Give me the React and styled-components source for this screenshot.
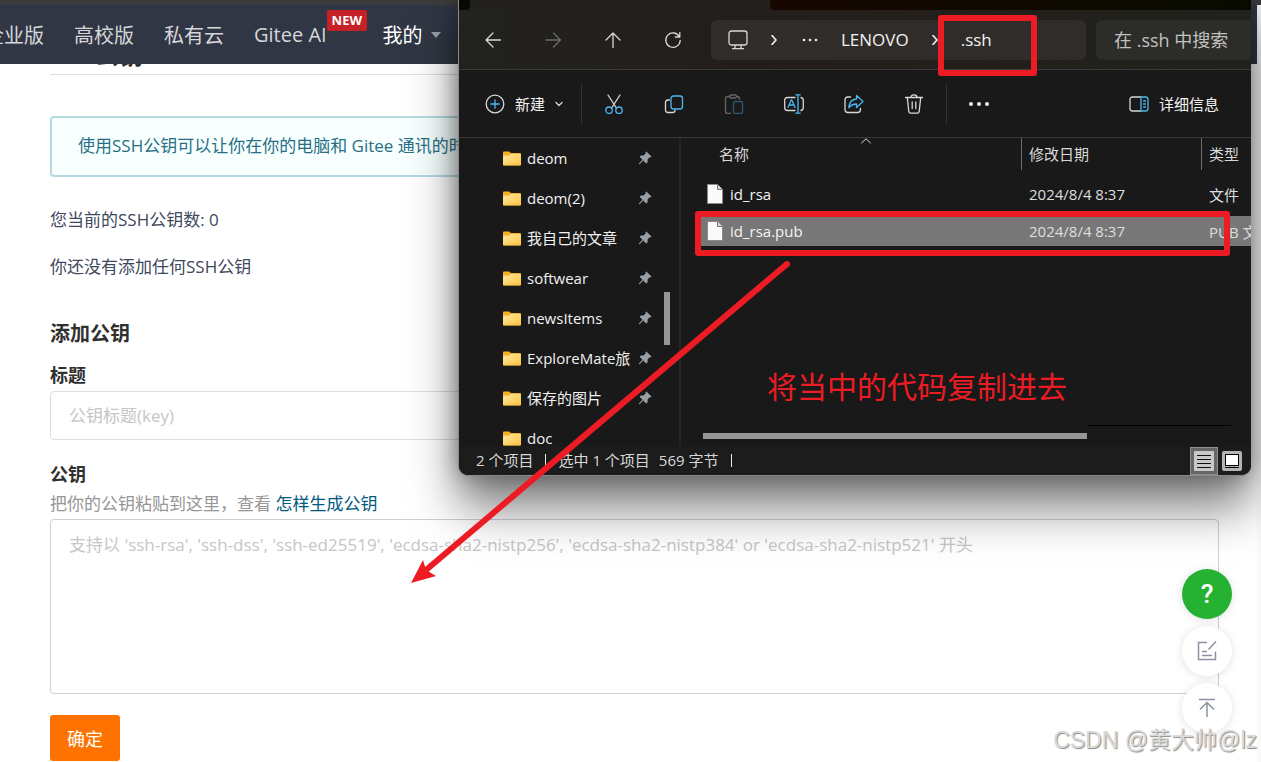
import styled, { createGlobalStyle } from "styled-components";

const GlobalStyle = createGlobalStyle`
  * {
    box-sizing: border-box;
  }
  body {
    margin: 0;
    background-color: #ffffff;
    font-family: "Open Sans", "Noto Sans CJK SC", sans-serif;
    font-size: 17px;
    color: #40485b;
  }
  a {
    color: inherit;
    text-decoration: none;
  }
  button, input, textarea {
    font: inherit;
    color: inherit;
  }
  button {
    padding: 0;
    border: none;
    background: none;
  }
`;

const Desktop = styled.div`
  position: relative;
  min-height: 100vh;
  overflow: hidden;
  display: flex;
  flex-direction: column;
`;

/* ---------- web page ---------- */

const BrowserEdge = styled.div`
  height: 5px;
  background-color: #3b3b3b;
`;

const Page = styled.div`
  flex: 1;
  border-right: 4px solid #fafafa;
`;

const Navbar = styled.nav`
  position: relative;
  z-index: 1;
  height: 59px;
  background-color: #303643;
  display: flex;
  align-items: center;
  gap: 30px;
  font-size: 20px;
  white-space: nowrap;
`;

const NavLink = styled.a`
  position: relative;
  display: flex;
  align-items: center;
  gap: 8px;
  color: ${(props) => (props.$active ? "#ffffff" : "#d6d7da")};
  &:first-child {
    margin-left: -16px;
  }
  &:last-child {
    margin-left: 26px;
  }
`;

const NewBadge = styled.span`
  position: absolute;
  left: 100%;
  bottom: 17px;
  padding: 0 5px;
  border-radius: 2px;
  background-color: #c62127;
  color: white;
  font-size: 13px;
  font-weight: 700;
  line-height: 21px;
`;

const Caret = styled.span`
  border: 5px solid transparent;
  border-top: 6px solid #9a9da5;
  border-bottom: none;
`;

const Content = styled.main`
  padding: 0 38px 0 50px;
`;

const PageTitle = styled.h2`
  margin: -23px 0 41px;
  padding-bottom: 5px;
  border-bottom: 1px solid #dedfe0;
  color: #303030;
  font-size: 24px;
  line-height: 28px;
`;

const Notice = styled.div`
  height: 61px;
  padding: 0 26px;
  border: 2px solid #b4dbe2;
  border-radius: 4px;
  background-color: #f8ffff;
  color: #276f86;
  line-height: 56px;
  white-space: nowrap;
  overflow: hidden;
`;

const Paragraph = styled.p`
  margin: 0 0 23px;
  line-height: 24px;
`;

const KeyInfo = styled.section`
  padding-top: 31px;
`;

const Form = styled.form`
  display: flex;
  flex-direction: column;
  align-items: stretch;
`;

const FormTitle = styled.h3`
  margin: 18px 0 13px;
  color: #303030;
  font-size: 20px;
  line-height: 28px;
`;

const Label = styled.label`
  color: #303030;
  font-size: 18px;
  font-weight: 700;
  line-height: 28px;
`;

const TitleInput = styled.input`
  height: 49px;
  margin: 2px 0 20px;
  padding: 0 18px;
  border: 1px solid #dcdce4;
  border-radius: 4px;
  background-color: white;
  &::placeholder {
    color: #c6c6c6;
  }
`;

const Help = styled.p`
  margin: 3px 0 2px;
  color: #969696;
  line-height: 26px;
`;

const HelpLink = styled.a`
  color: #005980;
`;

const KeyInput = styled.textarea`
  height: 175px;
  padding: 13px 18px;
  border: 1px solid #ceced8;
  border-radius: 4px;
  background-color: white;
  line-height: 24px;
  resize: vertical;
  &::placeholder {
    color: #c6c6c6;
  }
`;

const Submit = styled.button`
  align-self: flex-start;
  width: 70px;
  height: 46px;
  margin-top: 21px;
  border-radius: 3px;
  background-color: #fe7300;
  color: white;
  font-size: 18px;
`;

const FloatTools = styled.div`
  position: absolute;
  right: 29px;
  bottom: 29px;
  display: flex;
  flex-direction: column;
  gap: 7px;
`;

const FloatButton = styled.button`
  width: 50px;
  height: 50px;
  border-radius: 50%;
  display: flex;
  justify-content: center;
  align-items: center;
  background-color: ${(props) => (props.$primary ? "#25b131" : "#ffffff")};
  color: ${(props) => (props.$primary ? "#ffffff" : "#8c92a4")};
  box-shadow: 0 1px 10px rgba(0, 0, 0, 0.12);
  font-family: Roboto, sans-serif;
  font-size: 26px;
  font-weight: 500;
`;

const Watermark = styled.div`
  position: absolute;
  right: 4px;
  bottom: 6px;
  color: #d9d9d9;
  font-family: "Liberation Sans", "Noto Sans CJK SC", sans-serif;
  font-size: 23px;
  line-height: 32px;
  text-shadow: 1px 1px 1px #8a8a8a;
`;

/* ---------- file explorer ---------- */

const Window = styled.div`
  position: absolute;
  z-index: 2;
  top: 0;
  left: 458px;
  right: 10px;
  border: 1px solid #8a8a8a;
  border-top: none;
  border-right: none;
  border-radius: 0 0 10px 10px;
  overflow: hidden;
  background-color: #191919;
  box-shadow: 0 32px 48px rgba(0, 0, 0, 0.5), 0 0 22px rgba(0, 0, 0, 0.35);
  color: #f2f2f2;
  font-size: 15px;
  white-space: nowrap;
`;

const TabStrip = styled.div`
  height: 10px;
  display: flex;
  justify-content: space-between;
  background-color: #22211d;
`;

const InactiveTab = styled.div`
  width: ${(props) => props.$width};
  background: ${(props) => props.$fill};
  border-radius: ${(props) => props.$radius};
`;

const AddressRow = styled.div`
  height: 60px;
  border-bottom: 1px solid #3a3a3a;
  background: linear-gradient(90deg, #22221e, #231e1b 35%, #231f1b 65%, #20221d);
  display: flex;
  align-items: center;
`;

const NavButtons = styled.div`
  width: 252px;
  padding-left: 24px;
  display: flex;
  gap: 40px;
`;

const IconButton = styled.button`
  width: 20px;
  height: 20px;
  flex: none;
  display: flex;
  justify-content: center;
  align-items: center;
  opacity: ${(props) => (props.$dim ? 0.4 : 1)};
`;

const AddressBar = styled.div`
  flex: 1;
  height: 40px;
  padding-left: 17px;
  border-radius: 6px;
  background-color: #302c29;
  display: flex;
  align-items: center;
  gap: 21px;
  font-size: 17px;
`;

const Search = styled.input`
  width: 155px;
  height: 40px;
  margin-left: 10px;
  padding: 0 18px;
  border: none;
  border-radius: 6px 0 0 6px;
  background-color: #2c2c28;
  font-size: 18px;
  &::placeholder {
    color: #c2c2c0;
  }
`;

const Toolbar = styled.div`
  height: 68px;
  padding: 0 32px 0 26px;
  border-bottom: 1px solid #383838;
  display: flex;
  align-items: center;
`;

const TextButton = styled.button`
  margin-right: ${(props) => props.$gap || "0"};
  display: flex;
  align-items: center;
  gap: 10px;
`;

const Divider = styled.span`
  width: 1px;
  height: 40px;
  background-color: #333333;
`;

const ToolGroup = styled.div`
  padding: 0 22px;
  display: flex;
  gap: 40px;
`;

const Spacer = styled.div`
  flex: 1;
`;

const Body = styled.div`
  height: 308px;
  display: flex;
`;

const Sidebar = styled.div`
  width: 222px;
  border-right: 2px solid #252525;
  overflow: hidden;
  display: flex;
  justify-content: space-between;
`;

const FolderList = styled.div`
  width: 196px;
  padding-left: 44px;
`;

const FolderRow = styled.a`
  height: 40px;
  display: flex;
  align-items: center;
  svg {
    flex: none;
  }
`;

const FolderName = styled.span`
  width: 108px;
  margin: 0 3px 0 6px;
  overflow: hidden;
  line-height: 22px;
`;

const VerticalThumb = styled.div`
  width: 6px;
  height: 53px;
  margin: 154px 9px 0 0;
  background-color: #969696;
`;

const FilePane = styled.div`
  flex: 1;
  min-width: 0;
  padding-left: 20px;
  display: flex;
  flex-direction: column;
  justify-content: space-between;
`;

const FileTable = styled.table`
  width: 100%;
  table-layout: fixed;
  border-spacing: 0;
`;

const HeadCell = styled.th`
  position: relative;
  width: ${(props) => props.$width};
  height: 41px;
  padding: 0;
  vertical-align: top;
  text-align: left;
  font-weight: 400;
  color: #d8d8d8;
  span {
    display: block;
    height: 32px;
    padding-left: ${(props) => (props.$first ? "18px" : "7px")};
    border-left: ${(props) => (props.$first ? "none" : "1px solid #6b6b6b")};
    line-height: 32px;
  }
  svg {
    position: absolute;
    top: 0;
    left: 50%;
  }
`;

const FileRow = styled.tr`
  color: #dedede;
  td {
    height: 37px;
    padding: 0 0 0 8px;
    border-bottom: 7px solid transparent;
    background-color: ${(props) => (props.$selected ? "#777777" : "transparent")};
    background-clip: padding-box;
    overflow: hidden;
  }
  td:first-child {
    padding-left: 6px;
    color: #f4f4f4;
  }
`;

const FileName = styled.span`
  display: flex;
  align-items: center;
  gap: 7px;
`;

const HorizontalTrack = styled.div`
  height: 21px;
  padding: 8px 0 0 2px;
  display: flex;
`;

const HorizontalThumb = styled.div`
  width: 70%;
  height: 6px;
  background-color: #969696;
`;

const TrackLine = styled.div`
  width: 144px;
  height: 1px;
  margin-top: -8px;
  background-color: #000000;
`;

const StatusBar = styled.div`
  height: 29px;
  padding: 0 5px 0 17px;
  background-color: #1c1c1c;
  display: flex;
  align-items: center;
  color: #d8d8d8;
  line-height: 20px;
`;

const StatusItem = styled.span`
  padding-bottom: 2px;
  margin-right: ${(props) => props.$gap};
`;

const StatusMark = styled.span`
  width: 1px;
  height: 13px;
  margin-right: 12px;
  background-color: #e8e8e8;
`;

const ViewButton = styled.button`
  width: 28px;
  height: 28px;
  display: flex;
  justify-content: center;
  align-items: center;
  border: ${(props) => (props.$active ? "1px solid #8e8e8e" : "none")};
  background-color: ${(props) => (props.$active ? "#666666" : "transparent")};
`;

/* ---------- annotations ---------- */

const Mark = styled.div`
  position: absolute;
  z-index: 3;
  top: ${(props) => props.$top}px;
  left: ${(props) => props.$left}px;
  width: ${(props) => props.$width}px;
  height: ${(props) => props.$height}px;
  border: 6px solid #ed1c24;
  border-radius: 3px;
`;

const Arrow = styled.svg`
  position: absolute;
  z-index: 3;
  top: 250px;
  left: 400px;
  pointer-events: none;
`;

const NoteText = styled.div`
  position: absolute;
  z-index: 3;
  top: 365px;
  left: 767px;
  color: #ed1c24;
  font-size: 30px;
  line-height: 44px;
  white-space: nowrap;
`;

const blue = "#4cb8f0";

const Icon = ({ size = 20, children, ...rest }) => (
  <svg
    width={size}
    height={size}
    viewBox={`0 0 ${size} ${size}`}
    fill="none"
    stroke="#d8d8d8"
    strokeWidth="1.3"
    strokeLinecap="round"
    strokeLinejoin="round"
    aria-hidden="true"
    {...rest}
  >
    {children}
  </svg>
);

const Chevron = () => (
  <Icon size={10} strokeWidth="1.8" stroke="#e6e6e6">
    <path d="M3 0.5 7 5 3 9.5" />
  </Icon>
);

const FolderIcon = () => (
  <svg width="18" height="15" viewBox="0 0 18 15" aria-hidden="true">
    <defs>
      <linearGradient id="folder" x1="0" y1="0" x2="1" y2="1">
        <stop offset="0" stopColor="#ffe8a3" />
        <stop offset="1" stopColor="#fdc540" />
      </linearGradient>
    </defs>
    <path d="M0 1.5Q0 .5 1 .5H6L8 2H17Q18 2 18 3V6H0Z" fill="#f5b125" />
    <path d="M0 4.5H6L8 3H17Q18 3 18 4V13.5Q18 14.5 17 14.5H1Q0 14.5 0 13.5Z" fill="url(#folder)" />
    <path d="M.5 14.2H17.5" stroke="#e0a32a" strokeWidth=".7" />
  </svg>
);

const PinIcon = () => (
  <svg width="14" height="14" viewBox="0 0 14 14" aria-hidden="true">
    <path
      d="M8.4.4 13.4 5.4 12.5 6.5 11.5 6.2 9.6 8.6V11.2L8.2 12.4 5.3 9.5 1.8 12.9.8 13.2 1.1 12.2 4.5 8.7 1.6 5.8 2.8 4.4H5.4L7.8 2.4 7.4 1.4Z"
      fill="#98a1a8"
    />
  </svg>
);

const FileIcon = () => (
  <svg width="16" height="20" viewBox="0 0 16 20" aria-hidden="true">
    <path d="M.5.5H10.5L15.5 5.5V19.5H.5Z" fill="#fafafa" stroke="#8a8a8a" />
    <path d="M10.5.5V5.5H15.5" fill="#d8d8d8" stroke="#777777" />
  </svg>
);

const ScissorsIcon = () => (
  <Icon>
    <path d="M4 1 12.4 14M16 1 7.6 14" />
    <g stroke={blue}>
      <circle cx="5" cy="16.2" r="3.2" />
      <circle cx="15" cy="16.2" r="3.2" />
    </g>
  </Icon>
);

const CopyIcon = () => (
  <Icon>
    <path d="M5.5 6H4Q1.5 6 1.5 8.5V16Q1.5 18.5 4 18.5H8.5Q11 18.5 11 16.5" />
    <rect x="7" y="2" width="11.5" height="13" rx="2.5" stroke={blue} />
  </Icon>
);

const PasteIcon = () => (
  <Icon>
    <path d="M6 2.5H3.5Q1.5 2.5 1.5 4.5V17.5Q1.5 19.5 3.5 19.5H6.5M13 2.5Q15.5 2.5 15.5 5" />
    <rect x="5.5" y="1" width="7" height="3" rx="1.5" />
    <rect x="9.5" y="7.5" width="9" height="12" rx="1.5" stroke={blue} />
  </Icon>
);

const RenameIcon = () => (
  <Icon>
    <path d="M11 3.5H3.5Q.7 3.5 .7 6.3V13.7Q.7 16.5 3.5 16.5H11M17 3.5Q19.3 4 19.3 6.5V13.5Q19.3 16 17 16.5" />
    <path d="M4 13.5 7.2 6H7.8L11 13.5M5 11H10M14 .8V19.2M11.8.8H16.2M11.8 19.2H16.2" stroke={blue} />
  </Icon>
);

const ShareIcon = () => (
  <Icon>
    <path d="M6.5 3H4Q1 3 1 6V15.5Q1 18.5 4 18.5H13.5Q16.5 18.5 16.5 15.5V14.5" />
    <path d="M12.5 1.5 19 7.5 12.5 13.5V10Q7.5 10 4.8 13.8 5.5 5.5 12.5 5Z" stroke={blue} />
  </Icon>
);

const TrashIcon = () => (
  <Icon>
    <path d="M1.5 3.5H18.5M7 3.5Q7 .9 10 .9T13 3.5M3.3 3.5 4.8 17.4Q5 19.2 6.8 19.2H13.2Q15 19.2 15.2 17.4L16.7 3.5M8.2 8V14.5M11.8 8V14.5" />
  </Icon>
);

const DotsIcon = ({ r = 1.3, step = 6 }) => (
  <Icon stroke="none" fill="#f0f0f0">
    <circle cx={10 - step} cy="10" r={r} />
    <circle cx="10" cy="10" r={r} />
    <circle cx={10 + step} cy="10" r={r} />
  </Icon>
);

const folders = [
  { name: "deom", pinned: true },
  { name: "deom(2)", pinned: true },
  { name: "我自己的文章", pinned: true },
  { name: "softwear", pinned: true },
  { name: "newsItems", pinned: true },
  { name: "ExploreMate旅", pinned: true },
  { name: "保存的图片", pinned: true },
  { name: "doc", pinned: false },
];

const files = [
  { name: "id_rsa", date: "2024/8/4 8:37", type: "文件" },
  { name: "id_rsa.pub", date: "2024/8/4 8:37", type: "PUB 文件", selected: true },
];

const KeyPage = () => (
  <Page>
    <Navbar>
      <NavLink href="#">企业版</NavLink>
      <NavLink href="#">高校版</NavLink>
      <NavLink href="#">私有云</NavLink>
      <NavLink href="#">
        Gitee AI
        <NewBadge>NEW</NewBadge>
      </NavLink>
      <NavLink href="#" $active>
        我的
        <Caret />
      </NavLink>
    </Navbar>
    <Content>
      <PageTitle>SSH公钥</PageTitle>
      <Notice>使用SSH公钥可以让你在你的电脑和 Gitee 通讯的时</Notice>
      <KeyInfo>
        <Paragraph>您当前的SSH公钥数: 0</Paragraph>
        <Paragraph>你还没有添加任何SSH公钥</Paragraph>
      </KeyInfo>
      <Form>
        <FormTitle>添加公钥</FormTitle>
        <Label htmlFor="title">标题</Label>
        <TitleInput id="title" placeholder="公钥标题(key)" />
        <Label htmlFor="key">公钥</Label>
        <Help>
          把你的公钥粘贴到这里，查看 <HelpLink href="#">怎样生成公钥</HelpLink>
        </Help>
        <KeyInput
          id="key"
          placeholder="支持以 'ssh-rsa', 'ssh-dss', 'ssh-ed25519', 'ecdsa-sha2-nistp256', 'ecdsa-sha2-nistp384' or 'ecdsa-sha2-nistp521' 开头"
        />
        <Submit type="button">确定</Submit>
      </Form>
    </Content>
    <FloatTools>
      <FloatButton $primary>?</FloatButton>
      <FloatButton aria-label="反馈">
        <Icon stroke="currentColor" strokeWidth="1.5" strokeLinecap="butt" strokeLinejoin="miter">
          <path d="M10 1.5H1.5V18.5H18.5V10.5M19 .5 11.5 8.5M5 10.5H10M5 14.5H15" />
        </Icon>
      </FloatButton>
      <FloatButton aria-label="返回顶部">
        <Icon stroke="currentColor" strokeWidth="1.5" strokeLinecap="butt" strokeLinejoin="miter">
          <path d="M2 1.5H18M10 19V4.5M3 11.5 10 4.5 17 11.5" />
        </Icon>
      </FloatButton>
    </FloatTools>
  </Page>
);

const Explorer = () => (
  <Window>
    <TabStrip>
      <InactiveTab $width="11px" $fill="#080804" $radius="0 0 4px 0" />
      <InactiveTab
        $width="481px"
        $fill="linear-gradient(90deg, #160700, #080b00)"
        $radius="0 0 0 4px"
      />
    </TabStrip>
    <AddressRow>
      <NavButtons>
        <IconButton aria-label="后退">
          <Icon><path d="M17.5 10H3M10 3 3 10 10 17" /></Icon>
        </IconButton>
        <IconButton aria-label="前进" $dim>
          <Icon><path d="M3 10H17.5M10.5 3 17.5 10 10.5 17" /></Icon>
        </IconButton>
        <IconButton aria-label="向上">
          <Icon><path d="M10 17.5V3M3 10 10 3 17 10" /></Icon>
        </IconButton>
        <IconButton aria-label="刷新">
          <Icon><path d="M16.5 7A7.2 7.2 0 1 0 17.2 10.5M16.8 2.5V7H12.3" /></Icon>
        </IconButton>
      </NavButtons>
      <AddressBar>
        <Icon>
          <rect x="1" y="1" width="18" height="14" rx="2.5" />
          <path d="M7 15.5V18.5M13 15.5V18.5M4.5 18.7H15.5" />
        </Icon>
        <Chevron />
        <DotsIcon r={1.3} />
        <a href="#">LENOVO</a>
        <Chevron />
        <a href="#">.ssh</a>
      </AddressBar>
      <Search aria-label="搜索" placeholder="在 .ssh 中搜索" />
    </AddressRow>
    <Toolbar>
      <TextButton $gap="18px">
        <Icon>
          <circle cx="10" cy="10" r="8.8" />
          <path d="M10 5.8V14.2M5.8 10H14.2" stroke={blue} />
        </Icon>
        新建
        <Icon size={8}><path d="M1 2.5 4 5.5 7 2.5" /></Icon>
      </TextButton>
      <Divider />
      <ToolGroup>
        <IconButton aria-label="剪切"><ScissorsIcon /></IconButton>
        <IconButton aria-label="复制"><CopyIcon /></IconButton>
        <IconButton aria-label="粘贴" $dim><PasteIcon /></IconButton>
        <IconButton aria-label="重命名"><RenameIcon /></IconButton>
        <IconButton aria-label="共享"><ShareIcon /></IconButton>
        <IconButton aria-label="删除"><TrashIcon /></IconButton>
      </ToolGroup>
      <Divider />
      <ToolGroup>
        <IconButton aria-label="更多"><DotsIcon r={2} step={8} /></IconButton>
      </ToolGroup>
      <Spacer />
      <TextButton>
        <Icon>
          <path d="M12 3H3.5Q1 3 1 5.5V14.5Q1 17 3.5 17H12" />
          <path d="M12 3H16.5Q19 3 19 5.5V14.5Q19 17 16.5 17H12ZM14.5 7H16.5M14.5 10H16.5M14.5 13H16.5" stroke={blue} />
        </Icon>
        详细信息
      </TextButton>
    </Toolbar>
    <Body>
      <Sidebar>
        <FolderList>
          {folders.map((folder) => (
            <FolderRow href="#" key={folder.name}>
              <FolderIcon />
              <FolderName>{folder.name}</FolderName>
              {folder.pinned && <PinIcon />}
            </FolderRow>
          ))}
        </FolderList>
        <VerticalThumb />
      </Sidebar>
      <FilePane>
        <FileTable>
          <thead>
            <tr>
              <HeadCell $first $width="320px">
                <span>名称</span>
                <Icon size={10} strokeWidth="1"><path d="M.5 5 5 .8 9.5 5" /></Icon>
              </HeadCell>
              <HeadCell $width="180px"><span>修改日期</span></HeadCell>
              <HeadCell><span>类型</span></HeadCell>
            </tr>
          </thead>
          <tbody>
            {files.map((file) => (
              <FileRow key={file.name} $selected={file.selected}>
                <td>
                  <FileName>
                    <FileIcon />
                    {file.name}
                  </FileName>
                </td>
                <td>{file.date}</td>
                <td>{file.type}</td>
              </FileRow>
            ))}
          </tbody>
        </FileTable>
        <HorizontalTrack>
          <HorizontalThumb />
          <TrackLine />
        </HorizontalTrack>
      </FilePane>
    </Body>
    <StatusBar>
      <StatusItem $gap="12px">2 个项目</StatusItem>
      <StatusMark />
      <StatusItem $gap="9px">选中 1 个项目</StatusItem>
      <StatusItem $gap="12px">569 字节</StatusItem>
      <StatusMark />
      <Spacer />
      <ViewButton $active aria-label="详细信息视图">
        <Icon strokeLinecap="butt" stroke="#111111">
          <rect width="20" height="20" rx="1" fill="#c9c9c9" stroke="none" />
          <path d="M3 4.5H17M3 8.5H17M3 12.5H17M3 16.5H17" strokeWidth="1" />
        </Icon>
      </ViewButton>
      <ViewButton aria-label="大图标视图">
        <Icon stroke="#000000" strokeWidth="1" strokeLinejoin="miter">
          <rect width="20" height="20" rx="2" fill="#b5b5b5" stroke="none" />
          <rect x="3.5" y="3.5" width="13" height="11" fill="#ffffff" />
          <path d="M3.5 16.5H16.5" />
        </Icon>
      </ViewButton>
    </StatusBar>
  </Window>
);

const App = () => {
  return (
    <Desktop>
      <GlobalStyle />
      <BrowserEdge />
      <KeyPage />
      <Explorer />
      <Mark $top={15} $left={938} $width={99} $height={61} />
      <Mark $top={211} $left={695} $width={535} $height={45} />
      <Arrow width="400" height="340" viewBox="400 250 400 340">
        <path d="M787 264 426 570" stroke="#ed1c24" strokeWidth="6" strokeLinecap="butt" />
        <circle cx="787" cy="264" r="3" fill="#ed1c24" />
        <path d="M411 583 423 560 426 570 436 576Z" fill="#ed1c24" />
      </Arrow>
      <NoteText>将当中的代码复制进去</NoteText>
      <Watermark>CSDN @黄大帅@lz</Watermark>
    </Desktop>
  );
};

export default App;
